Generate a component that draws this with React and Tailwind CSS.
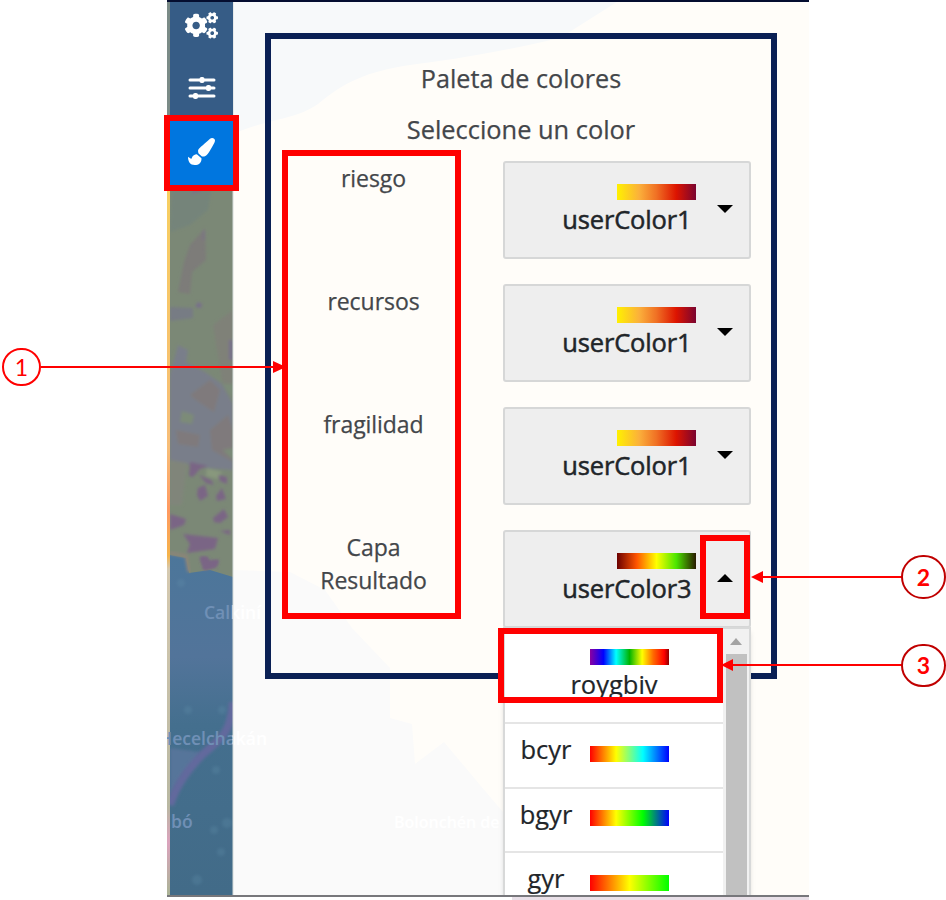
import React from "react";
import { FaCogs, FaPaintBrush } from "react-icons/fa";

const ROWS = [
  { label: "riesgo", value: "userColor1" },
  { label: "recursos", value: "userColor1" },
  { label: "fragilidad", value: "userColor1" },
  { label: "Capa Resultado", value: "userColor3", open: true },
];

const RAMPS = {
  userColor1: "bg-[linear-gradient(90deg,#fff100_0%,#fbb03b_28%,#f07024_50%,#dd1400_75%,#7a0430_100%)]",
  userColor3: "bg-[linear-gradient(90deg,#6b0000_0%,#ff5500_25%,#ffff00_50%,#4ce600_75%,#2a1a00_100%)]",
  roygbiv:
    "bg-[linear-gradient(90deg,#8b00a0_0%,#0000ff_17%,#00ffff_33%,#00b400_50%,#ffff00_66%,#ff6a00_80%,#ff0000_94%,#8b0000_100%)]",
  bcyr: "bg-[linear-gradient(90deg,#ff0000_0%,#ffff00_33%,#00ffff_67%,#0000ff_100%)]",
  bgyr: "bg-[linear-gradient(90deg,#ff0000_0%,#ffff00_33%,#00ff00_67%,#0000ff_100%)]",
  gyr: "bg-[linear-gradient(90deg,#ff0000_0%,#ffff00_50%,#00ff00_100%)]",
};

function Ramp({ name }) {
  return <div className={"h-4 w-[79px] shrink-0 " + RAMPS[name]} />;
}

function MapBackground() {
  return (
    <svg className="absolute inset-0" width="642" height="900" viewBox="167 0 642 900">
      <defs>
        <linearGradient id="strip" x1="0" y1="0" x2="0" y2="1">
          <stop offset="0" stopColor="#7b8b87" />
          <stop offset=".19" stopColor="#7b8b87" />
          <stop offset=".2" stopColor="#f7d060" />
          <stop offset=".36" stopColor="#f7c46a" />
          <stop offset=".5" stopColor="#f7bd78" />
          <stop offset=".57" stopColor="#ff9960" />
          <stop offset=".62" stopColor="#f5b34a" />
          <stop offset=".635" stopColor="#d5c9b0" />
          <stop offset=".9" stopColor="#b9b8a2" />
          <stop offset=".94" stopColor="#dba3bd" />
          <stop offset="1" stopColor="#a9b495" />
        </linearGradient>
        <linearGradient id="sea" x1="0" y1="0" x2="0" y2="1">
          <stop offset="0" stopColor="#4c769a" />
          <stop offset=".3" stopColor="#52749a" />
          <stop offset=".5" stopColor="#446f8e" />
          <stop offset="1" stopColor="#426b88" />
        </linearGradient>
        <linearGradient id="place" gradientUnits="userSpaceOnUse" x1="232" y1="0" x2="233" y2="0">
          <stop offset="0" stopColor="#7090b6" />
          <stop offset="1" stopColor="#ffffff" />
        </linearGradient>
        <filter id="soft" x="-10%" y="-10%" width="120%" height="120%">
          <feGaussianBlur stdDeviation="1.5" />
        </filter>
        <clipPath id="rail">
          <rect x="170" y="120" width="63" height="775" />
        </clipPath>
      </defs>
      <rect x="233" y="0" width="576" height="900" fill="#fffdf9" />
      <path d="M233 0H620L560 38C500 52 450 60 410 65C365 72 345 82 318 104C295 120 270 118 233 134Z" fill="#f7f9fa" />
      <path d="M233 570L290 572L325 590L352 628L390 668L390 718L412 724L415 764L444 742L480 785L503 812V896H233Z" fill="#fafafa" />
      <rect x="167" y="0" width="3" height="896" fill="url(#strip)" />
      <g clipPath="url(#rail)">
        <rect x="170" y="120" width="63" height="460" fill="#7b8876" />
        <g filter="url(#soft)">
          <path d="M172 182L212 186L208 210L190 225L170 232Z" fill="#75847a" />
          <path d="M190 245L205 228L206 260L192 272L190 294L178 292L184 262Z" fill="#7d7b79" />
          <path d="M213 325L233 310V400L222 380Z" fill="#7f8178" />
          <path d="M170 307L193 308V318L170 321Z" fill="#777b84" />
          <path d="M198 302l4 2l-1 4l-6-1z M229 340h4v20h-4z" fill="#786f8b" />
          <path d="M205 187L200 192L190 195L196 186Z M203 230h2v10h-3z" fill="#7b7583" />
          <path d="M178 345L188 350L186 362L205 372L222 384L233 404L233 470L205 468L170 460V375L174 360Z" fill="#797e8a" />
          <path d="M190 395L210 380L220 390L214 412L196 400Z M210 430L228 415L233 430V462L212 450Z M176 430L200 435L198 447L178 444Z" fill="#7f7a7b" />
          <path d="M182 411l12 4l-2 9l-12-2z M222 384h11v14z M223 450l10-2v12z" fill="#7c8b78" />
          <path d="M170 460L187 463L182 505H170Z" fill="#80857a" />
          <path d="M207 468L222 472L218 479L206 476Z" fill="#88987d" />
          <path
            d="M190 462L208 466L200 469L193 477L189 476Z M199 475L211 480L214 485L206 483Z M218 475L227 477V484L220 481Z M198 488L205 485L208 496L200 501L197 495Z M216 496L222 488L226 499L217 501Z M213 518L224 509L228 517L220 523L214 522Z M170 514L186 519L184 525L170 530Z M183 534L218 538L215 549L187 553L190 544Z M220 531L230 530V535Z M200 557L207 557L209 561L219 560L216 567L204 570Z"
            fill="#7a6585"
          />
        </g>
        <path d="M170 555L186 558L189 573L210 570L233 577V895H170Z" fill="url(#sea)" />
        <path d="M170 553L186 556L189 572" fill="none" stroke="#8d8479" strokeWidth="3" filter="url(#soft)" />
        <path
          d="M200 557L207 557L209 561L219 560L216 567L204 570Z"
          fill="#7a6585"
          filter="url(#soft)"
        />
        <path d="M170 748L200 752L195 765L182 776L170 796Z" fill="#57749a" filter="url(#soft)" />
        <path d="M233 702C231 732 222 738 203 754C182 775 174 792 170 805" fill="none" stroke="#62699d" strokeWidth="8" filter="url(#soft)" />
        <g fill="#6290ab" opacity=".28" filter="url(#soft)">
          <circle cx="216" cy="770" r="4" />
          <circle cx="227" cy="823" r="5" />
          <circle cx="214" cy="830" r="4" />
          <circle cx="197" cy="880" r="5" />
          <circle cx="221" cy="852" r="4" />
          <circle cx="188" cy="710" r="4" />
          <circle cx="181" cy="583" r="4" />
          <circle cx="222" cy="710" r="4" />
        </g>
      </g>
      <g fontFamily="'Open Sans', sans-serif" fontSize="17.500" fontWeight="600" fill="url(#place)">
        <text x="204" y="619">Calkiní</text>
        <text x="159" y="745">Hecelchakán</text>
        <text x="171" y="828">bó</text>
        <text x="394" y="828" fontSize="16">Bolonchén de</text>
      </g>
      <rect x="232.500" y="2" width="1" height="894" fill="#d5dcda" />
    </svg>
  );
}

function Sidebar() {
  return (
    <nav className="relative z-10 ml-[3px] flex h-[183px] w-[63px] shrink-0 flex-col bg-[#365c86] text-white">
      <div className="flex h-[55px] items-center justify-center pb-2">
        <FaCogs size={33} />
      </div>
      <div className="flex h-[63px] items-center justify-center pb-px">
        <svg width="28" height="24" viewBox="0 0 28 24">
          <g stroke="#fff" strokeWidth="3" strokeLinecap="round">
            <path d="M2 4H26M2 12H26M2 20H26" />
          </g>
          <g fill="#fff">
            <rect x="11.500" y="1" width="5" height="6" rx="2" />
            <rect x="18" y="9" width="5" height="6" rx="2" />
            <rect x="5" y="17" width="5" height="6" rx="2" />
          </g>
        </svg>
      </div>
      <div className="flex h-[65px] items-center justify-center bg-[#0076df] pb-[2px]">
        <FaPaintBrush size={27} />
      </div>
    </nav>
  );
}

function Option({ name }) {
  return (
    <div className="flex h-[64.700px] w-[218px] items-start border-t-2 border-[#e5e5e5] bg-white">
      <div className="w-[85px] pr-[3px] pt-[9px] text-center text-[25.500px] leading-8">{name}</div>
      <div className="pt-[21.500px]">
        <Ramp name={name} />
      </div>
    </div>
  );
}

function Dropdown() {
  return (
    <div className="absolute -left-[2px] top-[95px] z-20 flex h-[300px] w-[248px] border-2 border-[#d8d9d9] bg-[#f1f1f1] text-[#212529] shadow-md [-webkit-text-stroke:0.200px]">
      <div className="w-[218px] bg-white">
        <div className="flex h-[93px] flex-col items-center pt-[20px]">
          <div className="pl-[31px]">
            <Ramp name="roygbiv" />
          </div>
          <div className="mt-[3px] text-[25.500px] leading-8">roygbiv</div>
        </div>
        <Option name="bcyr" />
        <Option name="bgyr" />
        <Option name="gyr" />
      </div>
      <div className="flex flex-1 flex-col items-center">
        <div className="flex h-[25px] items-center">
          <div className="h-0 w-0 border-x-[6px] border-b-[7px] border-x-transparent border-b-[#a3a3a3]" />
        </div>
        <div className="w-[21px] flex-1 bg-[#c1c1c1]" />
      </div>
    </div>
  );
}

function Select({ value, open }) {
  return (
    <div className="relative ml-7 flex h-[98px] w-[248px] rounded-[3px] border-2 border-[#d6d7d7] bg-[#eeeeee] text-[#212529]">
      <div className="flex w-[190.500px] flex-col items-end pt-[21px]">
        <Ramp name={value} />
        <div className="mr-1 mt-[3px] text-[25.500px] leading-8 tracking-[-0.150px] [-webkit-text-stroke:0.500px]">{value}</div>
      </div>
      <div className="flex flex-1 items-center justify-center pb-[2px] pl-[6px]">
        {open ? (
          <div className="h-0 w-0 border-x-8 border-b-8 border-x-transparent border-b-black" />
        ) : (
          <div className="h-0 w-0 border-x-8 border-t-8 border-x-transparent border-t-black" />
        )}
      </div>
      {open && <Dropdown />}
    </div>
  );
}

function PalettePanel() {
  return (
    <section className="relative ml-8 mt-[33px] h-[646px] w-[512px] border-[6px] border-[#0a2054] text-[#43464a]">
      <h1 className="pt-[23px] text-center text-[25.200px] leading-8 [-webkit-text-stroke:0.250px]">Paleta de colores</h1>
      <h2 className="mt-[19px] text-center text-[25.400px] leading-8 [-webkit-text-stroke:0.250px]">Seleccione un color</h2>
      <div className="mt-4">
        {ROWS.map((row) => (
          <div key={row.label} className="flex h-[123px] items-start">
            <div className="flex w-[204px] justify-center pl-px pt-px">
              <div className="w-[120px] text-center text-[23px] leading-[33px] tracking-[-0.050px] [-webkit-text-stroke:0.250px]">{row.label}</div>
            </div>
            <Select value={row.value} open={row.open} />
          </div>
        ))}
      </div>
    </section>
  );
}

function Callouts() {
  return (
    <div className="pointer-events-none absolute inset-0 z-30">
      <div className="absolute left-[164px] top-[115px] h-[76px] w-[75px] border-[6px] border-[#ff0000]" />
      <div className="absolute left-[282px] top-[150px] h-[469px] w-[179px] border-[6px] border-[#ff0000]" />
      <div className="absolute left-[700px] top-[535px] h-[84px] w-[50px] border-[6px] border-[#ff0000]" />
      <div className="absolute left-[498px] top-[628px] h-[75px] w-[225px] border-[6px] border-[#ff0000]" />
      <svg className="absolute inset-0" width="946" height="900" viewBox="0 0 946 900">
        <g stroke="#ff0000" strokeWidth="2">
          <path d="M41 367H276M762 577H902M731 665H902" />
        </g>
        <path d="M273 361L286 367L273 373Z M763 571L751 577L763 583Z M733 659L721 665L733 671Z" fill="#ff0000" />
      </svg>
      <div className="absolute left-[2px] top-[348px] flex h-[38px] w-[39px] items-center justify-center rounded-full border-2 border-[#ff0000] bg-white font-[Lato] text-[23px] leading-none text-[#ff0000]">
        1
      </div>
      <div className="absolute left-[901px] top-[555px] flex h-11 w-[45px] items-center justify-center rounded-full border-2 border-[#c00000] bg-white font-[Lato] text-[23px] font-bold leading-none text-[#ff0000]">
        2
      </div>
      <div className="absolute left-[901px] top-[644px] flex h-[43px] w-[45px] items-center justify-center rounded-full border-2 border-[#c00000] bg-white font-[Lato] text-[23px] font-bold leading-none text-[#ff0000]">
        3
      </div>
    </div>
  );
}

export default function App() {
  return (
    <div className="relative h-[900px] w-[946px] overflow-hidden bg-white font-['Open_Sans',sans-serif]">
      <main className="relative ml-[167px] flex h-[895px] w-[642px] items-start overflow-hidden">
        <MapBackground />
        <div className="absolute inset-x-0 top-0 z-20 h-[2px] bg-[#040d30]" />
        <div className="pt-[2px]">
          <Sidebar />
        </div>
        <PalettePanel />
      </main>
      <div className="ml-[167px] h-[2px] w-[642px] bg-[#77777b]" />
      <div className="ml-[512px] h-[3px] w-[297px] bg-[#e9e0e8]" />
      <Callouts />
    </div>
  );
}
